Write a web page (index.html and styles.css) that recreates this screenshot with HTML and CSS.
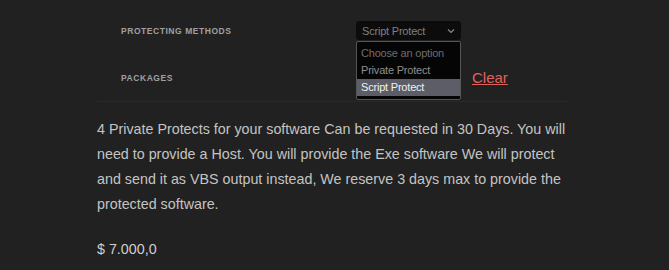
FILE: index.html
```html
<!DOCTYPE html>
<html lang="en">
<head>
    <meta charset="UTF-8">
    <meta name="viewport" content="width=device-width, initial-scale=1.0">
    <title>Script Protect</title>
    <link rel="stylesheet" href="styles.css">
</head>
<body>
    <div class="product">
        <!-- Variations -->
        <div class="variations">
            <div class="label">Protecting Methods</div>
            <div class="value">
                <div class="select-wrap">
                    <div class="select">
                        <span>Script Protect</span>
                        <svg class="chevron" width="8" height="6" viewBox="0 0 8 6">
                            <path d="M1 1.5 L4 4.5 L7 1.5" fill="none" stroke="#888" stroke-width="1.2"/>
                        </svg>
                    </div>
                    <!-- Open option list -->
                    <ul class="options">
                        <li class="placeholder">Choose an option</li>
                        <li>Private Protect</li>
                        <li class="selected">Script Protect</li>
                    </ul>
                </div>
            </div>

            <div class="label">Packages</div>
            <div class="value">
                <!-- covered by the open list above -->
                <div class="select"></div>
                <a href="#" class="reset">Clear</a>
            </div>
        </div>

        <p class="description">4 Private Protects for your software Can be requested in 30 Days. You will need to provide a Host. You will provide the Exe software We will protect and send it as VBS output instead, We reserve 3 days max to provide the protected software.</p>

        <div class="price">$ 7.000,0</div>
    </div>
</body>
</html>
```

FILE: styles.css
```css
body {
    margin: 0;
    background-color: #212121;
    font-family: "Liberation Sans", Arial, sans-serif;
}

.product {
    padding: 7px 0 0 97px;
}

/* Variations table */
.variations {
    display: grid;
    grid-template-columns: 259px auto;
    grid-auto-rows: 47px;
    width: 470px;
    border-bottom: 1px solid #292929;
}

.label {
    display: flex;
    align-items: center;
    padding-left: 24px;
    color: #a0a0a0;
    font-size: 8.5px;
    font-weight: bold;
    letter-spacing: 0.55px;
    text-transform: uppercase;
}

.value {
    display: flex;
    align-items: center;
    gap: 11px;
}

.select-wrap {
    position: relative;
}

.select {
    display: flex;
    align-items: center;
    justify-content: space-between;
    box-sizing: border-box;
    width: 105px;
    height: 19px;
    padding: 0 6px;
    background-color: #0c0c0c;
    border-radius: 3px;
    color: #808080;
    font-size: 11px;
    letter-spacing: -0.2px;
}

.chevron {
    margin-top: 1px;
}

/* Dropdown list */
.options {
    position: absolute;
    top: 20px;
    left: 0;
    z-index: 10;
    box-sizing: border-box;
    width: 105px;
    margin: 0;
    padding: 3px 0 3px;
    list-style: none;
    background-color: #050505;
    border: 1px solid #555;
    border-radius: 2px;
}

.options li {
    height: 17px;
    line-height: 17px;
    padding: 0 4px;
    color: #8e8e8e;
    font-size: 11px;
    letter-spacing: -0.2px;
}

.options li.placeholder {
    color: #6e6e6e;
}

.options li.selected {
    background-color: #5d5d68;
    color: #f0f0f0;
}

.reset {
    color: #e0625c;
    font-size: 15px;
    text-decoration: underline;
}

/* Description */
.description {
    width: 472px;
    margin: 15px 0 0;
    color: #c4c4c4;
    font-size: 14.3px;
    line-height: 25px;
}

.price {
    margin-top: 20px;
    color: #cfcfcf;
    font-size: 14.3px;
    line-height: 25px;
}
```
